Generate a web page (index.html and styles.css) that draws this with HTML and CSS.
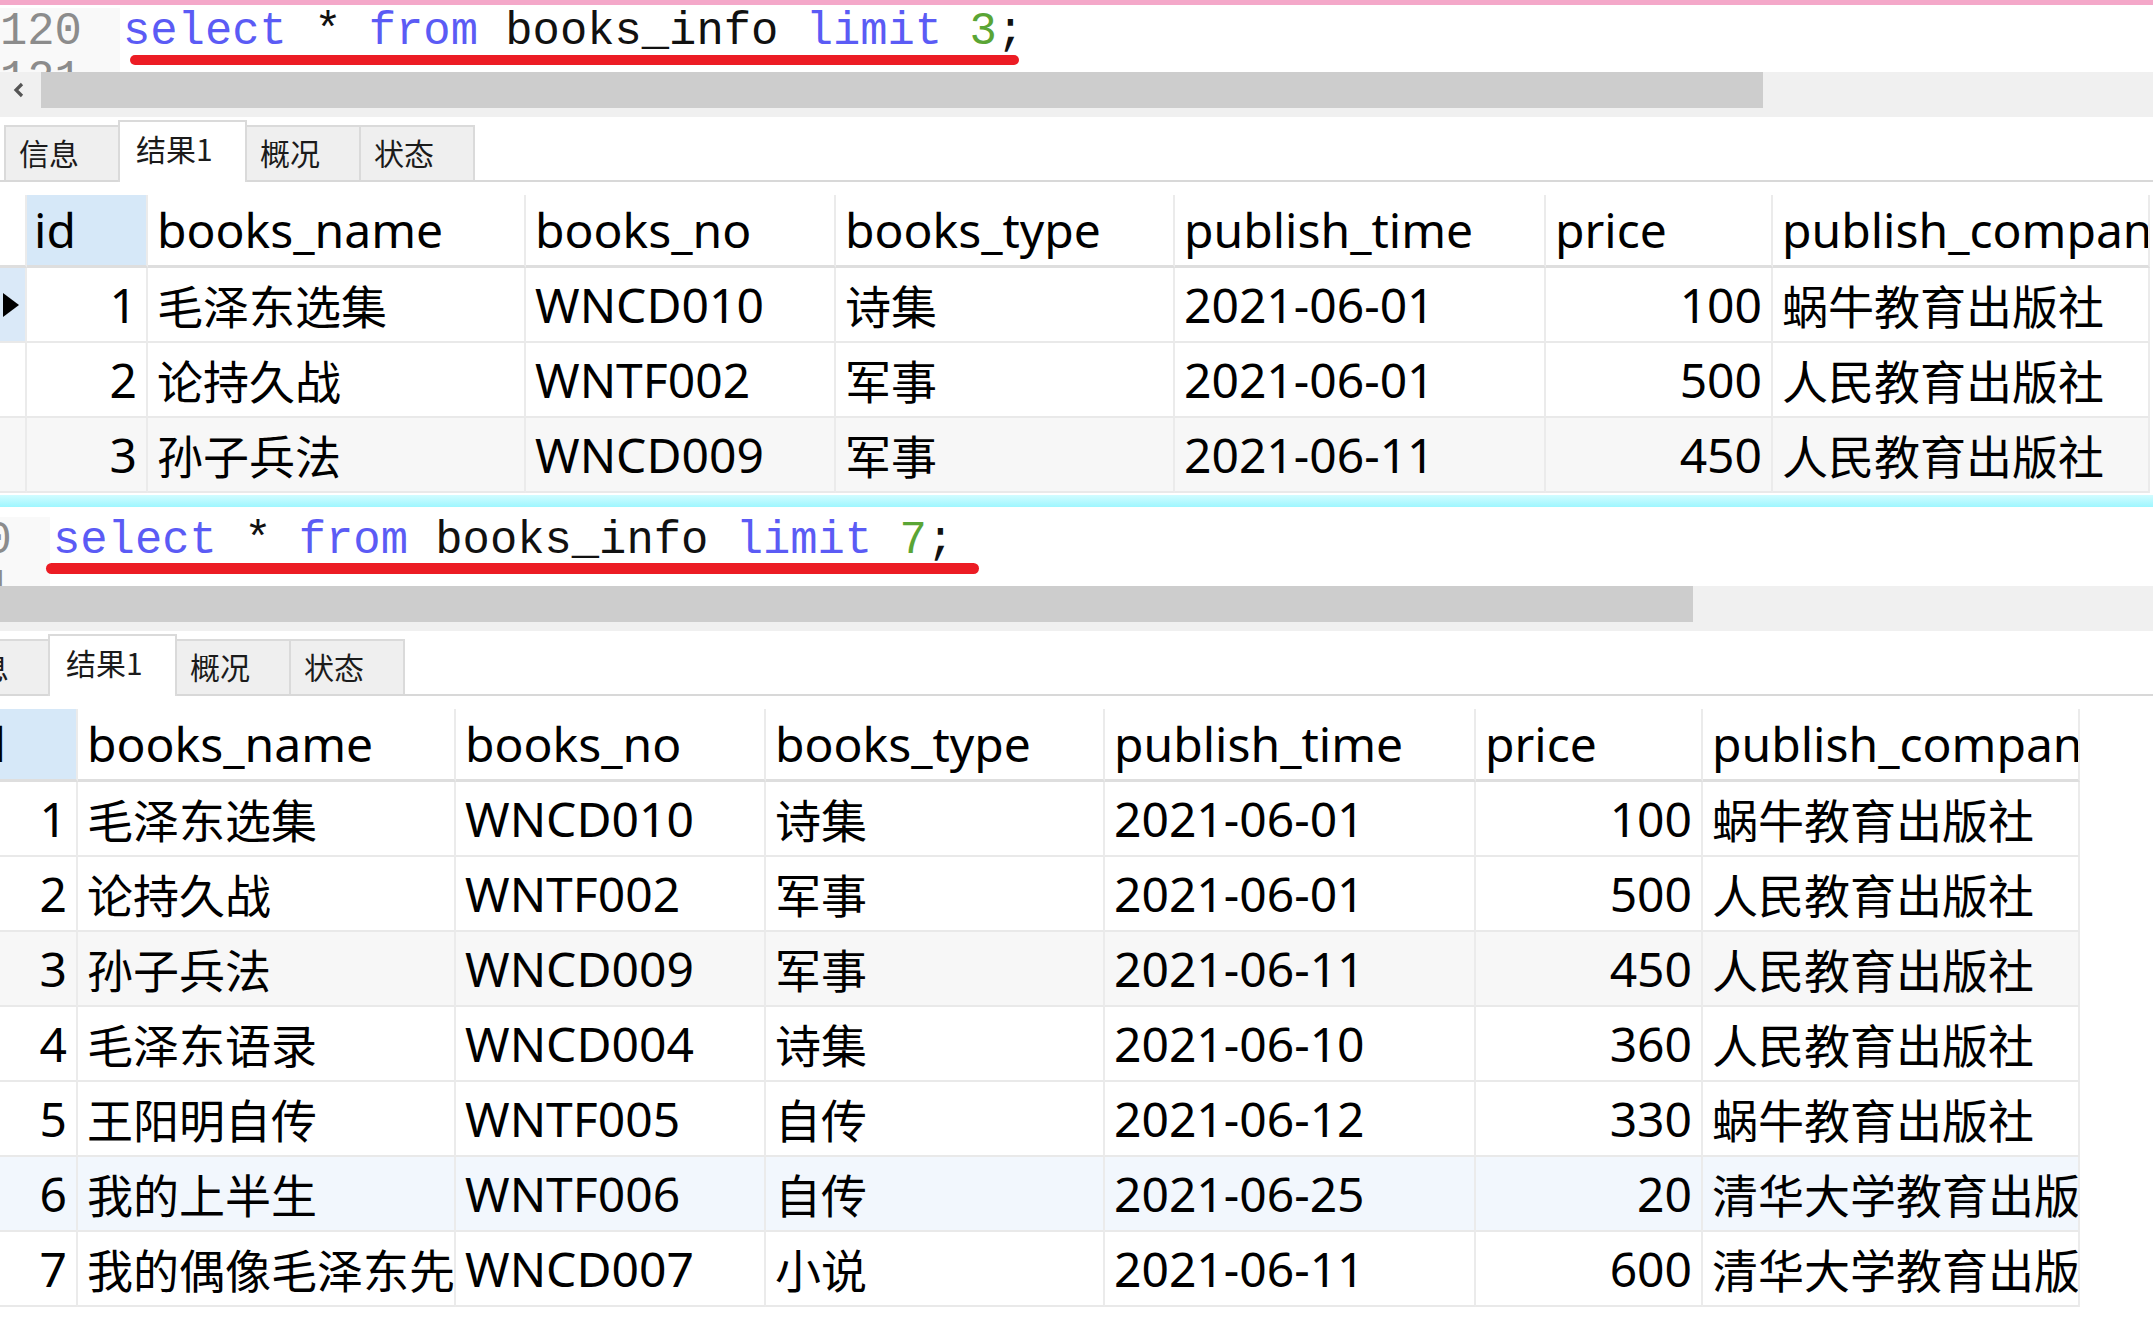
FILE: index.html
```html
<!DOCTYPE html>
<html lang="zh-CN">
<head>
<meta charset="utf-8">
<title>books_info limit</title>
<link rel="stylesheet" href="styles.css">
</head>
<body>
<div class="panel">
  <div class="pinkbar"></div>
  <div class="editor">
    <div class="line"><span class="ln">120</span><span class="code"><span class="kw">select</span> * <span class="kw">from</span> books_info <span class="kw">limit</span> <span class="num">3</span>;</span></div>
    <div class="line"><span class="ln">121</span><span class="code"></span></div>
    <div class="mark mark-1"></div>
  </div>
  <div class="hscroll">
    <div class="arrow"><svg width="16" height="16" viewBox="0 0 16 16"><polyline points="11,2 5,8 11,14" fill="none" stroke="#555" stroke-width="3.2" stroke-linejoin="miter"/></svg></div>
    <div class="thumb"></div>
  </div>
  <div class="tabs">
    <div class="tab">信息</div>
    <div class="tab active">结果1</div>
    <div class="tab">概况</div>
    <div class="tab">状态</div>
  </div>
  <div class="grid">
    <div class="row head"><div class="c ind"></div><div class="c sel">id</div><div class="c">books_name</div><div class="c">books_no</div><div class="c">books_type</div><div class="c">publish_time</div><div class="c">price</div><div class="c">publish_company</div></div>
    <div class="row"><div class="c ind cur"><span class="tri"></span></div><div class="c r">1</div><div class="c"><span class="zh">毛泽东选集</span></div><div class="c">WNCD010</div><div class="c"><span class="zh">诗集</span></div><div class="c">2021-06-01</div><div class="c r">100</div><div class="c"><span class="zh">蜗牛教育出版社</span></div></div>
    <div class="row"><div class="c ind"></div><div class="c r">2</div><div class="c"><span class="zh">论持久战</span></div><div class="c">WNTF002</div><div class="c"><span class="zh">军事</span></div><div class="c">2021-06-01</div><div class="c r">500</div><div class="c"><span class="zh">人民教育出版社</span></div></div>
    <div class="row alt"><div class="c ind"></div><div class="c r">3</div><div class="c"><span class="zh">孙子兵法</span></div><div class="c">WNCD009</div><div class="c"><span class="zh">军事</span></div><div class="c">2021-06-11</div><div class="c r">450</div><div class="c"><span class="zh">人民教育出版社</span></div></div>
  </div>
</div>

<div class="panel panel-2">
  <div class="cyanbar"></div>
  <div class="editor">
    <div class="line"><span class="ln">120</span><span class="code"><span class="kw">select</span> * <span class="kw">from</span> books_info <span class="kw">limit</span> <span class="num">7</span>;</span></div>
    <div class="line"><span class="ln">121</span><span class="code"></span></div>
    <div class="mark mark-2"></div>
  </div>
  <div class="hscroll">
    <div class="arrow"><svg width="16" height="16" viewBox="0 0 16 16"><polyline points="11,2 5,8 11,14" fill="none" stroke="#555" stroke-width="3.2"/></svg></div>
    <div class="thumb"></div>
  </div>
  <div class="tabs">
    <div class="tab">信息</div>
    <div class="tab active">结果1</div>
    <div class="tab">概况</div>
    <div class="tab">状态</div>
  </div>
  <div class="grid">
    <div class="row head"><div class="c ind"></div><div class="c sel">id</div><div class="c">books_name</div><div class="c">books_no</div><div class="c">books_type</div><div class="c">publish_time</div><div class="c">price</div><div class="c">publish_company</div></div>
    <div class="row"><div class="c ind cur"><span class="tri"></span></div><div class="c r">1</div><div class="c"><span class="zh">毛泽东选集</span></div><div class="c">WNCD010</div><div class="c"><span class="zh">诗集</span></div><div class="c">2021-06-01</div><div class="c r">100</div><div class="c"><span class="zh">蜗牛教育出版社</span></div></div>
    <div class="row"><div class="c ind"></div><div class="c r">2</div><div class="c"><span class="zh">论持久战</span></div><div class="c">WNTF002</div><div class="c"><span class="zh">军事</span></div><div class="c">2021-06-01</div><div class="c r">500</div><div class="c"><span class="zh">人民教育出版社</span></div></div>
    <div class="row alt"><div class="c ind"></div><div class="c r">3</div><div class="c"><span class="zh">孙子兵法</span></div><div class="c">WNCD009</div><div class="c"><span class="zh">军事</span></div><div class="c">2021-06-11</div><div class="c r">450</div><div class="c"><span class="zh">人民教育出版社</span></div></div>
    <div class="row"><div class="c ind"></div><div class="c r">4</div><div class="c"><span class="zh">毛泽东语录</span></div><div class="c">WNCD004</div><div class="c"><span class="zh">诗集</span></div><div class="c">2021-06-10</div><div class="c r">360</div><div class="c"><span class="zh">人民教育出版社</span></div></div>
    <div class="row"><div class="c ind"></div><div class="c r">5</div><div class="c"><span class="zh">王阳明自传</span></div><div class="c">WNTF005</div><div class="c"><span class="zh">自传</span></div><div class="c">2021-06-12</div><div class="c r">330</div><div class="c"><span class="zh">蜗牛教育出版社</span></div></div>
    <div class="row hover"><div class="c ind"></div><div class="c r">6</div><div class="c"><span class="zh">我的上半生</span></div><div class="c">WNTF006</div><div class="c"><span class="zh">自传</span></div><div class="c">2021-06-25</div><div class="c r">20</div><div class="c"><span class="zh">清华大学教育出版社</span></div></div>
    <div class="row"><div class="c ind"></div><div class="c r">7</div><div class="c"><span class="zh">我的偶像毛泽东先生</span></div><div class="c">WNCD007</div><div class="c"><span class="zh">小说</span></div><div class="c">2021-06-11</div><div class="c r">600</div><div class="c"><span class="zh">清华大学教育出版社</span></div></div>
  </div>
</div>
</body>
</html>
```

FILE: styles.css
```css
* { box-sizing: border-box; }
html, body { margin: 0; padding: 0; }
body {
  width: 2153px;
  height: 1332px;
  overflow: hidden;
  background: #fff;
  font-family: "Noto Sans", "Noto Sans CJK SC", sans-serif;
  color: #000;
}

.panel { display: flex; flex-direction: column; width: 2153px; }
.panel-2 { margin-left: -70px; width: 2223px; }

.pinkbar { height: 5px; background: #f4a8c9; }
.cyanbar {
  height: 12px;
  margin-top: 2px;
  background: linear-gradient(#d2fcff, #9ef6ff);
}

/* SQL editor */
.editor {
  position: relative;
  height: 67px;
  padding-top: 3px;
  overflow: hidden;
  font-family: "Liberation Mono", "DejaVu Sans Mono", monospace;
  font-size: 45.5px;
  line-height: 48px;
}
.panel-2 .editor { height: 79px; padding-top: 10px; }
.line { display: flex; }
.ln {
  flex: none;
  width: 120px;
  color: #8c8c8c;
  background: #f9f9f9;
}
.code { padding-left: 3px; white-space: pre; color: #111; }
.kw { color: #5b5bf5; }
.num { color: #5aa535; }

.mark { position: absolute; background: #ec1c24; border-radius: 6px; }
.mark-1 { left: 130px; top: 50px; width: 889px; height: 10px; }
.mark-2 { left: 116px; top: 56px; width: 933px; height: 11px; }

/* horizontal scrollbar */
.hscroll {
  height: 45px;
  background: #f0f0f0;
  display: flex;
  align-items: flex-start;
}
.arrow {
  width: 41px;
  height: 36px;
  display: flex;
  align-items: center;
  justify-content: center;
  padding-right: 4px;
}
.thumb { width: 1722px; height: 36px; background: #cdcdcd; }

/* result tabs */
.tabs {
  height: 65px;
  display: flex;
  align-items: flex-end;
  padding-left: 4px;
  border-bottom: 2px solid #d8d8d8;
}
.tab {
  width: 116px;
  height: 55px;
  margin-right: -2px;
  background: #efefef;
  border: 2px solid #dadada;
  border-bottom: none;
  font-family: "Noto Sans CJK SC", sans-serif;
  font-size: 30px;
  color: #1b1b1b;
  display: flex;
  align-items: center;
  padding-left: 13px;
  padding-bottom: 4px;
}
.tab.active {
  position: relative;
  z-index: 1;
  width: 129px;
  height: 62px;
  margin-bottom: -2px;
  background: #fff;
  padding-left: 16px;
  padding-bottom: 8px;
}

/* data grid */
.grid { margin-top: 13px; display: flex; flex-direction: column; width: 2150px; }
.row {
  display: grid;
  grid-template-columns: 27px 121px 378px 310px 339px 371px 227px 377px;
  height: 75px;
}
.row.head { height: 73px; }
.row.alt { background: #f7f7f7; }
.row.hover { background: #f2f7fd; }

.c {
  border-right: 2px solid #ebebeb;
  border-bottom: 2px solid #e9e9e9;
  padding: 0 9px;
  white-space: nowrap;
  overflow: hidden;
  font-size: 48px;
  line-height: 73px;
}
.head .c { border-bottom: 3px solid #dedede; line-height: 70px; }
.c.r { text-align: right; }
.c.sel { background: #d6e8f8; padding-left: 7px; }
.zh { font-family: "Noto Sans CJK SC", sans-serif; font-size: 46px; }

.ind { padding: 0; display: flex; align-items: center; justify-content: center; }
.ind.cur { background: #dae9f8; }
.tri {
  width: 0;
  height: 0;
  border-left: 16px solid #000;
  border-top: 12px solid transparent;
  border-bottom: 12px solid transparent;
  margin-right: 3px;
}
```
